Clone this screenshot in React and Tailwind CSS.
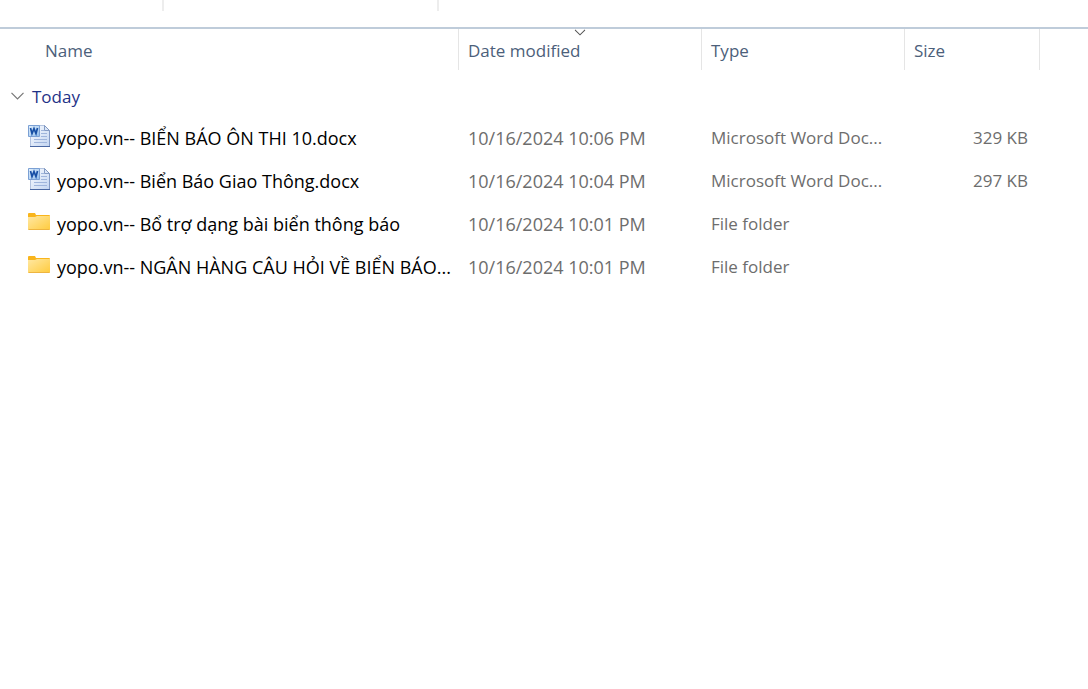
import { useState } from 'react'

const FILES = [
  { name: 'yopo.vn-- BIỂN BÁO ÔN THI 10.docx', date: '10/16/2024 10:06 PM', kind: 'word', type: 'Microsoft Word Doc...', size: '329 KB' },
  { name: 'yopo.vn-- Biển Báo Giao Thông.docx', date: '10/16/2024 10:04 PM', kind: 'word', type: 'Microsoft Word Doc...', size: '297 KB' },
  { name: 'yopo.vn-- Bổ trợ dạng bài biển thông báo', date: '10/16/2024 10:01 PM', kind: 'folder', type: 'File folder', size: '' },
  { name: 'yopo.vn-- NGÂN HÀNG CÂU HỎI VỀ BIỂN BÁO...', date: '10/16/2024 10:01 PM', kind: 'folder', type: 'File folder', size: '' },
]

function Chevron({ className }) {
  return (
    <svg viewBox="0 0 13 8" fill="none" stroke="currentColor" strokeWidth="1.2" className={className} aria-hidden="true">
      <path d="M0.5 0.8 6.5 6.8 12.5 0.8" />
    </svg>
  )
}

function WordIcon() {
  return (
    <svg viewBox="0 0 24 24" className="mb-1 h-6 w-6 shrink-0" aria-hidden="true">
      <defs>
        <linearGradient id="page" x1="0" y1="0" x2="1" y2="1">
          <stop offset="0" stopColor="#fafcff" />
          <stop offset="1" stopColor="#c3d5f1" />
        </linearGradient>
        <linearGradient id="tile" x1="0" y1="0" x2="1" y2="1">
          <stop offset="0" stopColor="#e6f2fd" />
          <stop offset="1" stopColor="#8fbceb" />
        </linearGradient>
      </defs>
      <path d="M3.5 1.5h14l5 5v16h-19z" fill="url(#page)" stroke="#b3c3df" />
      <path d="M3 22.5h20" stroke="#4a68a3" />
      <path d="M22.5 7v15" stroke="#8299c4" />
      <path d="M17.5 1.5v5h5z" fill="#dbe6f7" stroke="#6f89b8" strokeWidth="0.8" />
      <path d="M14 6.5h3M14 9.5h6M14 12.5h6M7 15.5h13M7 18.5h13" stroke="#9fb5dc" />
      <path d="M1.5 1.5h11v11h-11z" fill="url(#tile)" stroke="#7ba0d4" />
      <path d="M3.5 4 5 9.6 7 4.6 9 9.6 10.5 4" fill="none" stroke="#174fa5" strokeWidth="1.7" />
    </svg>
  )
}

function FolderIcon() {
  return (
    <svg viewBox="0 0 24 24" className="mb-1 h-6 w-6 shrink-0" aria-hidden="true">
      <defs>
        <linearGradient id="folder" x1="0" y1="0" x2="1" y2="1">
          <stop offset="0" stopColor="#ffe8a3" />
          <stop offset="1" stopColor="#ffcb3d" />
        </linearGradient>
      </defs>
      <path d="M1 4q0-1 1-1h6l1 2h13q1 0 1 1v4H1z" fill="#f9b51c" />
      <path d="M1 7h7l2-1h13v13q0 1-1 1H2q-1 0-1-1z" fill="url(#folder)" />
      <path d="M1.5 19.5h21" stroke="#eeb540" />
    </svg>
  )
}

export default function App() {
  const [open, setOpen] = useState(true)

  return (
    <div className="min-h-screen bg-white font-['Open_Sans','Noto_Sans',sans-serif] text-[17px] leading-6">
      <div className="flex h-[27px]">
        <div className="h-[11px] w-[164px] border-r-2 border-[#ededed]" />
        <div className="h-[11px] w-[275px] border-r-2 border-[#ededed]" />
      </div>
      <table className="w-full table-fixed border-separate border-spacing-0 border-t-2 border-[#bfccda] text-left whitespace-nowrap">
        <colgroup>
          <col className="w-[459px]" />
          <col className="w-[243px]" />
          <col className="w-[203px]" />
          <col className="w-[135px]" />
          <col />
        </colgroup>
        <thead className="text-[#4c607a]">
          <tr className="h-[41px]">
            <th scope="col" className="border-r border-[#e5e5e5] p-0 pt-0.5 pl-[45px] font-normal">
              <button>Name</button>
            </th>
            <th scope="col" aria-sort="descending" className="relative border-r border-[#e5e5e5] p-0 pt-0.5 pl-[9px] font-normal">
              <button>Date modified</button>
              <Chevron className="absolute top-0 left-1/2 h-[7px] w-[11px] -translate-x-1/2 text-[#555]" />
            </th>
            <th scope="col" className="border-r border-[#e5e5e5] p-0 pt-0.5 pl-[9px] font-normal">
              <button>Type</button>
            </th>
            <th scope="col" className="border-r border-[#e5e5e5] p-0 pt-0.5 pl-[9px] font-normal">
              <button>Size</button>
            </th>
            <td />
          </tr>
        </thead>
        <tbody>
          <tr className="h-[46px]">
            <th scope="rowgroup" colSpan={5} className="p-0 pt-2 pl-[11px] font-normal text-[#1f3287]">
              <button onClick={() => setOpen(!open)} aria-expanded={open} className="flex items-center gap-2">
                <Chevron className="mb-0.5 h-2 w-[13px] text-[#777]" />
                Today
              </button>
            </th>
          </tr>
          {open && FILES.map((f) => (
            <tr key={f.name} className="h-[43px] text-[#6d6d6d]">
              <td className="p-0 pl-[27px] text-lg leading-6 text-black">
                <div className="flex items-center gap-1.5">
                  {f.kind === 'word' ? <WordIcon /> : <FolderIcon />}
                  {f.name}
                </div>
              </td>
              <td className="p-0 pl-[9px] text-lg leading-6">{f.date}</td>
              <td className="p-0 pl-[9px]">{f.type}</td>
              <td className="p-0 pr-3 text-right">{f.size}</td>
              <td />
            </tr>
          ))}
        </tbody>
      </table>
    </div>
  )
}
